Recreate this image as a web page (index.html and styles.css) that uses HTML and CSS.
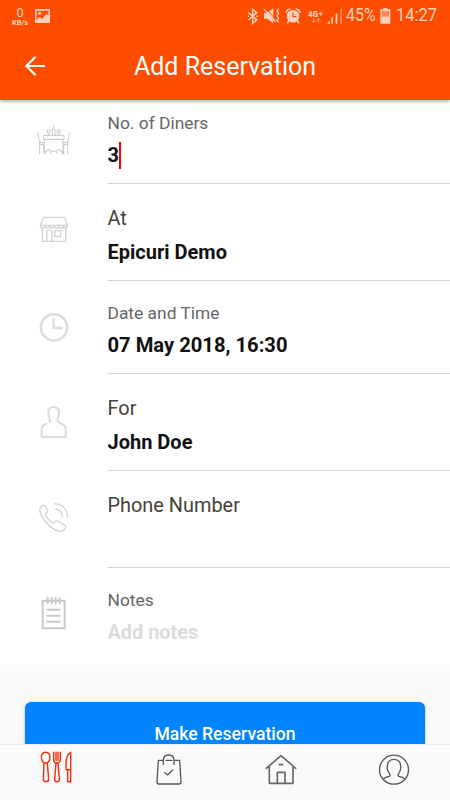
FILE: index.html
```html
<!DOCTYPE html>
<html lang="en">
<head>
<meta charset="utf-8">
<title>Add Reservation</title>
<link rel="stylesheet" href="styles.css">
</head>
<body>
<div class="app">
  <header class="header">
    <div class="status">
      <div class="speed"><span class="speed-value">0</span><span class="speed-unit">KB/s</span></div>
      <svg class="picture" width="15" height="14" viewBox="105 24 45 42"><path fill="currentColor" fill-rule="evenodd" d="M108 24h39q3 0 3 3v36q0 3-3 3h-39q-3 0-3-3V27q0-3 3-3zM110 29v28l8-9 8 5 14-14 5 5V29z"/><circle cx="119" cy="37" r="5" fill="currentColor"/></svg>
      <div class="status-right">
        <svg class="bluetooth" width="12" height="17" viewBox="60 20 36 51"><path fill="none" stroke="currentColor" stroke-width="4.5" d="M64 34l25 21-12 11V24l12 10-25 22M63 45h3M88 45h5"/></svg>
        <svg class="mute" width="18" height="16" viewBox="109 22 54 48"><path fill="currentColor" d="M112 36h10l18-13v45l-18-14h-10z"/><path fill="none" stroke="#ff4d00" stroke-width="3" d="M115 22l34 35"/><path fill="none" stroke="currentColor" stroke-width="4" d="M112 25l35 38"/><path fill="none" stroke="currentColor" stroke-width="4" d="M156 24l-5 7 5 7-5 7 5 7-5 7 5 7"/></svg>
        <svg class="alarm" width="16" height="16" viewBox="174 22 48 48"><circle cx="198" cy="47" r="19" fill="currentColor"/><path fill="none" stroke="currentColor" stroke-width="5" d="M178 36q0-10 12-11M206 25q12 1 12 11M185 60l-4 8M211 60l4 8"/><path fill="none" stroke="#ff4d00" stroke-width="4" d="M198 36v12h9"/></svg>
        <div class="network"><span>4G+</span><svg width="10" height="5" viewBox="0 0 30 15"><path fill="none" stroke="currentColor" stroke-width="3" opacity=".6" d="M8 0v13M3 8l5 5 5-5M22 15V2M17 7l5-5 5 5"/></svg></div>
        <svg class="signal" width="16" height="16" viewBox="302 22 48 48"><path fill="currentColor" d="M302 69l9-9v9zM315 69V52l5-4v21zM328 69V41l5-4v32z"/><path fill="currentColor" opacity=".4" d="M341 69V28l6-5v46z"/></svg>
        <span class="percent">45%</span>
        <svg class="battery" width="11" height="16" viewBox="465 22 33 48"><path fill="currentColor" d="M474 22h13v4h9v43h-30V26h8z"/><path fill="#ff4d00" opacity=".55" d="M470 31h22v17h-22z"/></svg>
        <span class="clock">14:27</span>
      </div>
    </div>
    <div class="toolbar">
      <svg class="back" width="22" height="22" viewBox="72 162 66 66"><path fill="none" stroke="#fff" stroke-width="6.5" d="M135 195H80M107 167l-28 28 28 28"/></svg>
      <h1>Add Reservation</h1>
    </div>
  </header>

  <main class="form">
    <section class="row diners">
      <svg class="icon" viewBox="48 51 108 108"><path d="M53 81l6 31v35M59 113h12M59 119h12M71 119v28M149 81l-6 31v35M143 113h-12M143 119h-12M131 119v28M71 91h61v12H71zM73 103v36h7l4-6 8 4q9 4 18 0l8-4 5 6h6v-36M73 139l5 7M130 139l-5 7M92 145v-5M110 145v-5M97 91V74l4-4 4 4v17M101 70V61M86 91v-7M82 75h8v7q-4 4-8 0zM116 91v-7M112 75h8v7q-4 4-8 0z"/></svg>
      <div class="field"><label class="label">No. of Diners</label><div class="value editing">3<i class="caret"></i></div></div>
    </section>
    <section class="row venue">
      <svg class="icon" viewBox="48 321 108 108"><path d="M71 337h62l10 24H61zM61 361q0 8 7 8t7-8q0 8 7 8t7-8q0 8 7 8t7-8q0 8 7 8t7-8q0 8 7 8t7-8q0 8 6 8t6-8M67 370v39h70v-39M80 408v-27q0-5 8-5t8 5v27M104 377h18v17h-18z"/></svg>
      <div class="field"><label class="label large">At</label><div class="value">Epicuri Demo</div></div>
    </section>
    <section class="row date">
      <svg class="icon clock-icon" viewBox="48 45 108 108"><circle cx="102" cy="97" r="39.5"/><path d="M101 73v26h24"/></svg>
      <div class="field"><label class="label">Date and Time</label><div class="value">07 May 2018, 16:30</div></div>
    </section>
    <section class="row guest">
      <svg class="icon person" viewBox="48 327 108 108"><path d="M89 382v-12q-4-5-4-17 0-17 16-17t16 17q0 12-4 17v10l18 10q6 3 6 10v26H65v-26q0-7 6-10l8-4"/></svg>
      <div class="field"><label class="label large">For</label><div class="value">John Doe</div></div>
    </section>
    <section class="row phone">
      <svg class="icon" viewBox="48 45 108 108"><path d="M62 66l7-5q4-1 8 4l5 9q3 5-2 9-5 3-3 8 6 14 21 22 5 3 8-2 4-5 9-2l18 11q7 5 3 10-5 9-15 9-21-2-44-28-20-25-17-39 1-4 2-6zM107 72q18 3 21 23M104 56q35 3 39 39"/></svg>
      <div class="field"><label class="label large">Phone Number</label></div>
    </section>
    <section class="row notes">
      <svg class="icon notepad" viewBox="48 330 108 108"><path d="M68 347h66v83H68zM83 339v16M95 339v16M107 339v16M119 339v16M82 374h37M82 392h37M82 410h37"/></svg>
      <div class="field"><label class="label">Notes</label><div class="value placeholder">Add notes</div></div>
    </section>
  </main>

  <div class="action"><button class="submit">Make Reservation</button></div>

  <nav class="nav">
    <svg class="dining" viewBox="114 171 108 108"><path d="M132 219q-8-6-8-16 0-16 13-16t13 16q0 10-8 16l4 50q-1 6-8 6t-8-6zM132 219h10M161 187v22q0 8 7 10l-4 50q0 6 7 6t7-6l-4-50q7-2 7-10v-22M168 187v24M174 187v24M168 219h6M212 187v88h-9v-36h-5v-17q0-28 14-35M203 239h9"/></svg>
    <svg class="tab" viewBox="453 186 108 108"><path d="M489 211h-14l-4 65q0 6 6 6h60q6 0 6-6l-4-65h-14M498 211h18M490 223v-12q0-16 16-16t16 16v12M494 248l9 7 15-15"/></svg>
    <svg class="tab home" viewBox="114 186 108 108"><path d="M124 235l44-38 44 38M133 229v51h71v-51M157 280v-33h23v33M163 224h10"/></svg>
    <svg class="tab" viewBox="453 186 108 108"><circle cx="507" cy="239" r="43.5"/><path d="M475 268q2-5 15-8 8-2 3-10-5-6-6-14-2-28 20-28t20 28q-1 8-6 14-5 8 3 10 13 3 15 8"/></svg>
  </nav>
</div>
</body>
</html>
```
FILE: styles.css
```css
* { box-sizing: border-box; }
body { margin: 0; font-family: Roboto, "Liberation Sans", sans-serif; background: #fafafa; }
.app { height: 800px; display: flex; flex-direction: column; overflow: hidden; }

.header { flex: 0 0 99.5px; margin-bottom: -.5px; background: #ff4d00; z-index: 1; box-shadow: 0 1px 4px rgba(0, 0, 0, .4); }
.status { height: 32px; display: flex; align-items: center; padding: 0 13px 0 11px; color: #ffd0bb; }
.speed { width: 18px; display: flex; flex-direction: column; align-items: center; }
.speed-value { font-size: 12.5px; line-height: 11px; }
.speed-unit { margin-top: 1px; font-size: 7.5px; line-height: 7px; font-weight: 700; }
.picture { margin-left: 6px; }
.status-right { display: flex; align-items: center; margin-left: auto; }
.bluetooth { margin-left: -2px; margin-right: 1px; }
.mute { margin-left: 3px; }
.alarm { margin-left: 4px; }
.network { width: 17px; margin-left: 6px; display: flex; flex-direction: column; align-items: center; font: bold 8px/9px "Open Sans", sans-serif; }
.signal { margin-left: 3px; }
.percent { width: 31px; margin-left: 3px; font-size: 19px; line-height: 20px; margin-bottom: 2px; transform: scaleX(.84); transform-origin: left; white-space: nowrap; }
.battery { margin-left: 3px; }
.clock { width: 41px; margin-left: 5px; font-size: 19px; line-height: 20px; margin-bottom: 2px; transform: scaleX(.87); transform-origin: left; white-space: nowrap; }
.toolbar { height: 67px; display: grid; grid-template-columns: 46px 1fr 46px; align-items: center; }
.back { margin-left: 24px; }
.toolbar h1 { margin: 2px 0 0; text-align: center; color: #fff; font-size: 25px; font-weight: 400; }

.form { flex: 0 0 566px; background: #fff; }
.row { display: grid; grid-template-columns: 36px 1fr; column-gap: 35.5px; padding-left: 36px; align-items: start; height: 97px; }
.icon { width: 36px; height: 36px; fill: none; stroke: #d5d4d4; stroke-width: 4.2; stroke-linecap: round; stroke-linejoin: round; }
.field { align-self: stretch; border-bottom: 1.5px solid #d6d6d6; padding-top: 22px; }
.label { display: block; height: 24px; line-height: 24px; font-size: 17.4px; color: #666; }
.label.large { line-height: 26px; font-size: 19.9px; color: #454336; }
.value { display: flex; align-items: center; height: 28px; margin-top: 8px; font-size: 20px; font-weight: 700; color: #111; }
.diners { height: 85px; }
.diners .icon { margin-top: 23px; stroke-width: 3.4; stroke: #cfcfcf; }
.diners .field { padding-top: 12px; }
.diners .value { margin-top: 6px; }
.caret { width: 2px; height: 27px; background: #f00; }
.venue .icon { margin-top: 28px; }
.date { height: 93px; }
.date .icon { margin-top: 29px; }
.date .field { padding-top: 20px; }
.date .value { margin-top: 6px; font-size: 20.2px; }
.icon.clock-icon { stroke: #dddbdb; stroke-width: 7.5; }
.guest .icon { margin-top: 30px; }
.icon.person { stroke-width: 6; stroke: #dddada; }
.phone .icon { margin-top: 29px; }
.notes .icon { margin-top: 27px; }
.icon.notepad { stroke: #c9c9c9; stroke-width: 6; stroke-linejoin: miter; }
.notes .field { border: 0; padding-top: 20px; }
.notes .value { margin-top: 6px; font-size: 19.9px; }
.value.placeholder { color: #dedcdc; }

.action { flex: 0 0 79px; padding: 37px 25px 0; overflow: hidden; }
.submit { display: block; width: 100%; height: 64px; padding: 0 0 1px; border: 0; border-radius: 6px; background: #0084ff; color: #fff; font: 500 17.6px Roboto, sans-serif; box-shadow: 0 1px 3px rgba(0, 0, 0, .3); }
.nav { flex: 1; display: grid; grid-template-columns: repeat(4, 1fr); justify-items: center; align-items: start; background: #fafafa; border-top: 1px solid #e8e8ee; }
.nav svg { width: 36px; height: 36px; fill: none; stroke-linecap: round; stroke-linejoin: round; }
.dining { margin-top: 2px; stroke: #f5300c; stroke-width: 4.3; }
.tab { margin-top: 7px; stroke: #575757; stroke-width: 4; }
.nav .home { stroke-width: 5; stroke: #686868; }
```
